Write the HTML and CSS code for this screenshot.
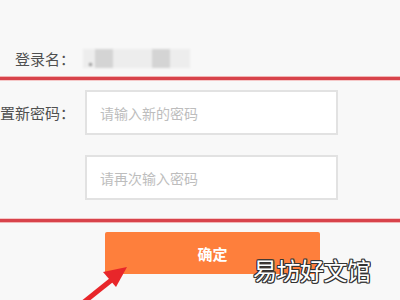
FILE: index.html
```html
<!DOCTYPE html>
<html lang="zh-CN">
<head>
    <meta charset="UTF-8">
    <meta name="viewport" content="width=device-width, initial-scale=1.0">
    <title>重置密码</title>
    <link rel="stylesheet" href="styles.css">
</head>
<body>

    <div class="page">
        <div class="form-row name-row">
            <div class="label"><span>登录名：</span></div>
            <div class="masked">
                <i class="blk light w1"></i>
                <i class="blk dark"></i>
                <i class="blk light w2"></i>
                <i class="blk dark"></i>
                <i class="blk light w3"></i>
                <i class="dot"></i>
            </div>
        </div>

        <div class="highlight-box">
            <div class="form-row">
                <div class="label"><span>重置新密码：</span></div>
                <input type="password" class="field" placeholder="请输入新的密码">
            </div>
            <div class="form-row">
                <div class="label"></div>
                <input type="password" class="field" placeholder="请再次输入密码">
            </div>
        </div>

        <button type="button" class="btn-ok">确定</button>
    </div>

    <!-- arrow pointing to the button -->
    <svg class="arrow" width="70" height="50" viewBox="0 0 70 50">
        <path d="M4 48 L34 24" stroke="#e8262a" stroke-width="5" stroke-linecap="round"/>
        <polygon points="47,13 23,18 36,33" fill="#e8262a"/>
    </svg>

    <div class="watermark">易坊好文馆</div>

</body>
</html>
```

FILE: styles.css
```css
* {
    box-sizing: border-box;
    margin: 0;
    padding: 0;
}

body {
    font-family: "Noto Sans CJK SC", "Noto Sans", sans-serif;
    background-color: #f8f8f8;
    width: 400px;
    height: 300px;
    overflow: hidden;
    position: relative;
}

.page {
    padding-top: 46px;
}

.form-row {
    display: flex;
    align-items: center;
}

.label {
    width: 75px;
    flex-shrink: 0;
    display: flex;
    justify-content: flex-end;
    font-size: 15px;
    color: #505050;
    white-space: nowrap;
    margin-right: 10px;
}

.name-row {
    height: 24px;
}

/* blurred user name */
.masked {
    position: relative;
    display: flex;
    align-items: center;
    height: 20px;
    margin-left: -2px;
    filter: blur(1px);
}

.masked i {
    display: block;
}

.masked .dot {
    position: absolute;
    left: 6px;
    top: 15px;
    width: 3px;
    height: 3px;
    background-color: #9a9a9a;
}

.masked .blk {
    width: 18px;
    height: 19px;
}

.masked .light {
    background-color: #ededed;
}

.masked .dark {
    background-color: #d4d4d4;
}

.masked .w1 {
    width: 12px;
}

.masked .w2 {
    width: 39px;
}

.masked .w3 {
    width: 20px;
}

.highlight-box {
    margin-top: 7px;
    margin-left: -20px;
    padding: 10px 0 19px 20px;
    width: 440px;
    border-top: 3px solid #d8434b;
    border-bottom: 3px solid #d8434b;
    box-shadow: 0 -1px 0 #f2b5b5, 0 1px 0 #f2b5b5, inset 0 1px 0 #f5c8c8, inset 0 -1px 0 #f5c8c8;
    display: flex;
    flex-direction: column;
    gap: 20px;
}

.field {
    width: 253px;
    height: 45px;
    border: 2px solid #e2e2e2;
    background-color: #fff;
    padding-left: 13px;
    font-family: inherit;
    font-size: 14px;
    outline: none;
}

.field::placeholder {
    color: #bdbdbd;
}

.btn-ok {
    display: block;
    margin: 10px 0 0 105px;
    width: 215px;
    height: 42px;
    background-color: #fe7f3c;
    border: none;
    border-radius: 2px;
    color: #fff;
    font-family: inherit;
    font-size: 15px;
    font-weight: bold;
}

.arrow {
    position: absolute;
    left: 80px;
    top: 254px;
}

.watermark {
    position: absolute;
    left: 253px;
    top: 252px;
    font-size: 24px;
    color: #fff;
    letter-spacing: -0.5px;
    text-shadow: -1px -1px 0 #333, 1px -1px 0 #333, -1px 1px 0 #333, 1px 1px 0 #333, 0 1px 0 #333, 0 -1px 0 #333, 1px 0 0 #333, -1px 0 0 #333;
}
```
